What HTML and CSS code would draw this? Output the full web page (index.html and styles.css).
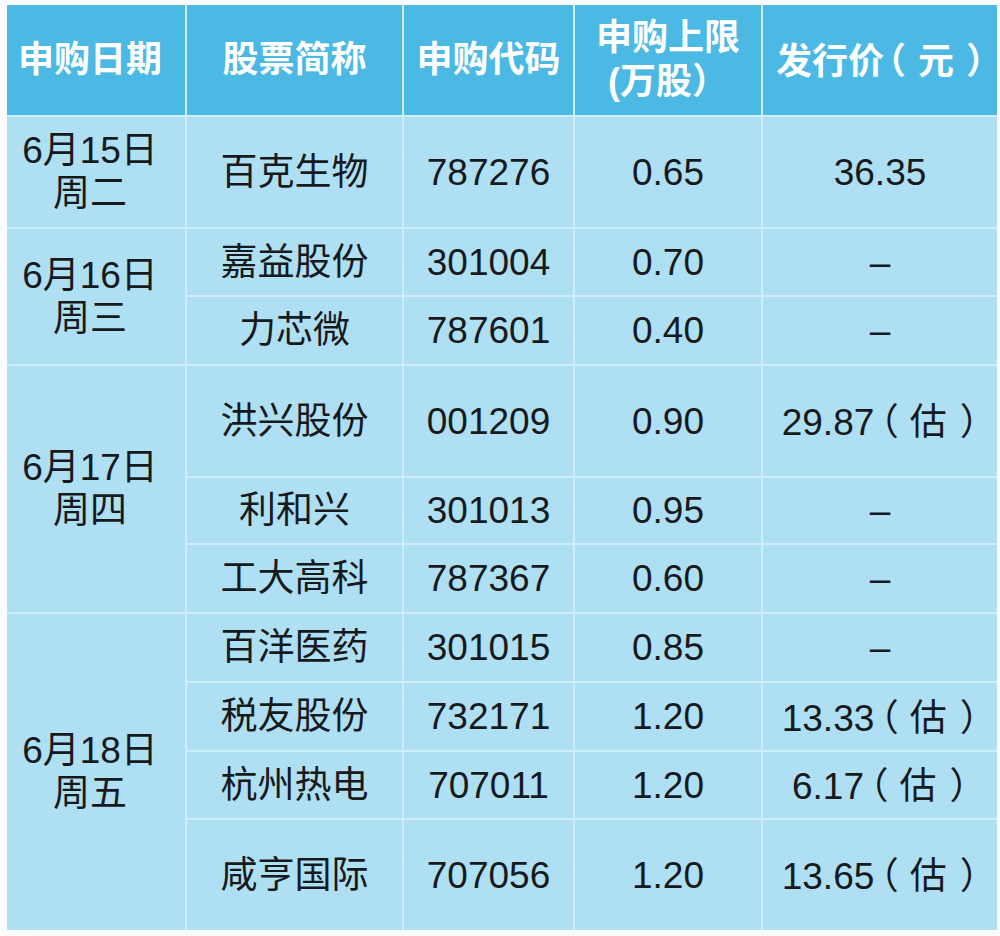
FILE: index.html
```html
<!DOCTYPE html>
<html lang="zh-CN">
<head>
<meta charset="utf-8">
<title>新股申购</title>
<link rel="stylesheet" href="styles.css">
</head>
<body>
<table class="ipo">
  <colgroup>
    <col class="c-date"><col class="c-name"><col class="c-code"><col class="c-limit"><col class="c-price">
  </colgroup>
  <thead>
    <tr class="h-head">
      <th class="date">申购日期</th>
      <th>股票简称</th>
      <th>申购代码</th>
      <th>申购上限<br>(万股）</th>
      <th>发行价<span class="lp-h">（</span>元<span class="rp-h">）</span></th>
    </tr>
  </thead>
  <tbody>
    <tr class="h-tall">
      <td class="date">6月15日<br>周二</td>
      <td>百克生物</td><td>787276</td><td>0.65</td><td>36.35</td>
    </tr>
    <tr class="h-68">
      <td class="date" rowspan="2">6月16日<br>周三</td>
      <td>嘉益股份</td><td>301004</td><td>0.70</td><td>–</td>
    </tr>
    <tr class="h-69">
      <td>力芯微</td><td>787601</td><td>0.40</td><td>–</td>
    </tr>
    <tr class="h-tall">
      <td class="date" rowspan="3">6月17日<br>周四</td>
      <td>洪兴股份</td><td>001209</td><td>0.90</td><td>29.87<span class="lp">（</span>估<span class="rp">）</span></td>
    </tr>
    <tr class="h-67">
      <td>利和兴</td><td>301013</td><td>0.95</td><td>–</td>
    </tr>
    <tr class="h-69">
      <td>工大高科</td><td>787367</td><td>0.60</td><td>–</td>
    </tr>
    <tr class="h-69">
      <td class="date" rowspan="4">6月18日<br>周五</td>
      <td>百洋医药</td><td>301015</td><td>0.85</td><td>–</td>
    </tr>
    <tr class="h-69">
      <td>税友股份</td><td>732171</td><td>1.20</td><td>13.33<span class="lp">（</span>估<span class="rp">）</span></td>
    </tr>
    <tr class="h-68">
      <td>杭州热电</td><td>707011</td><td>1.20</td><td>6.17<span class="lp">（</span>估<span class="rp">）</span></td>
    </tr>
    <tr class="h-last">
      <td>咸亨国际</td><td>707056</td><td>1.20</td><td>13.65<span class="lp">（</span>估<span class="rp">）</span></td>
    </tr>
  </tbody>
</table>
</body>
</html>
```

FILE: styles.css
```css
html, body {
  margin: 0;
  background: #fbfcfd;
}
body {
  padding: 5px 3px 6px 7px;
  font-family: "Liberation Sans", "Noto Sans CJK SC", sans-serif;
}
.ipo {
  width: 990px;
  border-collapse: collapse;
  border-style: hidden;
  table-layout: fixed;
  background: #afdff3;
  color: #161a1d;
}
.c-date { width: 179px; }
.c-name { width: 217px; }
.c-code { width: 171px; }
.c-limit { width: 188px; }
.c-price { width: 235px; }

.ipo th, .ipo td {
  border: 2px solid #cdeefa;
  padding: 0;
  text-align: center;
  vertical-align: middle;
  font-size: 37px;
  line-height: 43px;
  font-weight: normal;
  white-space: nowrap;
}
.ipo th {
  background: #4bb9e4;
  color: #ffffff;
  font-weight: bold;
  font-size: 36px;
  line-height: 44px;
}
.ipo .date {
  padding-right: 12px;
}
.lp, .rp, .lp-h, .rp-h {
  font-family: "Noto Sans CJK SC", sans-serif;
  font-feature-settings: "halt" 1;
}
.lp {
  margin-left: 6px;
  margin-right: 11px;
}
.rp {
  margin-left: 13px;
}
.lp-h {
  margin-left: 4px;
  margin-right: 12px;
}
.rp-h {
  margin-left: 12px;
}
.h-head { height: 111px; }
.h-tall { height: 112px; }
.h-67 { height: 67px; }
.h-68 { height: 68px; }
.h-69 { height: 69px; }
.h-last { height: 111px; }
```
